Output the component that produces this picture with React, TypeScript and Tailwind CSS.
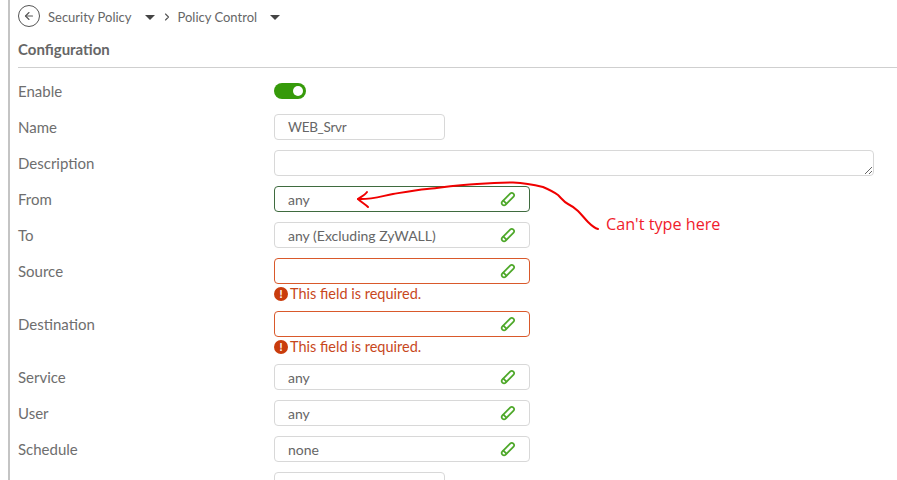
import { ArrowLeft, ChevronRight } from 'lucide-react'

const font = 'font-["Lato","Noto_Sans",sans-serif]'

function PencilIcon() {
  return (
    <svg width="16" height="16" viewBox="0 0 16 16" fill="none" stroke="#4ea82a" strokeWidth="1.8" strokeLinecap="round" strokeLinejoin="round">
      <path d="M2.2 10.6 10.4 2.4a1.9 1.9 0 0 1 2.7 0l.5.5a1.9 1.9 0 0 1 0 2.7l-8.2 8.2a1.9 1.9 0 0 1-2.7 0l-.5-.5a1.9 1.9 0 0 1 0-2.7Z" />
      <path d="M3.4 9.6 6.4 12.6" />
    </svg>
  )
}

function Caret() {
  return <div className="h-0 w-0 border-x-[5px] border-t-[5px] border-x-transparent border-t-[#444]" />
}

function Row({ label, children }: { label: string; children: React.ReactNode }) {
  return (
    <div className="flex items-start">
      <div className="h-[26px] w-[256px] shrink-0 text-[15px] leading-[27px] text-[#6e6e6e]">{label}</div>
      <div className="min-w-0 flex-1">{children}</div>
    </div>
  )
}

function PickField({ value, tone = 'normal' }: { value?: string; tone?: 'normal' | 'active' | 'error' }) {
  const border =
    tone === 'active' ? 'border-[#3f6b3f]' : tone === 'error' ? 'border-[#d9592b]' : 'border-[#d8d8d8]'
  return (
    <div className={`flex h-[26px] w-[256px] items-center justify-between rounded border bg-white pl-[13px] pr-[13px] text-[14px] text-[#666] ${border}`}>
      <span>{value}</span>
      <PencilIcon />
    </div>
  )
}

function FieldError() {
  return (
    <div className="flex h-[17px] items-center gap-[2px] pt-[2px] text-[14.5px] text-[#c8471c]">
      <div className="flex h-[14px] w-[14px] items-center justify-center rounded-full bg-[#c93c0c] text-[11px] leading-none font-bold text-white">!</div>
      <span>This field is required.</span>
    </div>
  )
}

export default function App() {
  return (
    <div className={`relative h-screen overflow-hidden bg-white ${font}`}>
      <div className="flex h-full">
        <div className="ml-2 h-full w-[2px] shrink-0 bg-[#c4c4c4]" />
        <div className="min-w-0 flex-1 pl-2">
          <div className="flex h-[34px] items-center text-[13px] text-[#666]">
            <div className="-mt-[2px] flex h-[22px] w-[22px] items-center justify-center rounded-full border border-[#555] text-[#555]">
              <ArrowLeft size={12} strokeWidth={2.2} />
            </div>
            <span className="ml-[8px] pt-[2px]">Security Policy</span>
            <div className="ml-[13px]"><Caret /></div>
            <ChevronRight size={12} strokeWidth={2.2} className="ml-[6px] text-[#555]" />
            <span className="ml-[5px] pt-[2px]">Policy Control</span>
            <div className="ml-[13px]"><Caret /></div>
          </div>
          <div className="mt-[5px] border-b border-[#cfcfcf] pb-[8px] text-[15px] leading-[20px] font-bold text-[#666]">Configuration</div>
          <div className="mt-[10px] flex flex-col gap-[10px]">
            <Row label="Enable">
              <div className="flex h-[26px] items-center">
                <div className="flex h-4 w-8 items-center justify-end rounded-full bg-[#369a0a] pr-[3px]">
                  <div className="h-[10px] w-[10px] rounded-full bg-white" />
                </div>
              </div>
            </Row>
            <Row label="Name">
              <div className="flex h-[26px] w-[171px] items-center rounded border border-[#d8d8d8] pl-[13px] text-[13.5px] tracking-[-0.3px] text-[#666]">WEB_Srvr</div>
            </Row>
            <Row label="Description">
              <textarea className="block h-[26px] min-h-[26px] w-[600px] rounded border border-[#d8d8d8] bg-white" />
            </Row>
            <Row label="From"><PickField value="any" tone="active" /></Row>
            <Row label="To"><PickField value="any (Excluding ZyWALL)" /></Row>
            <Row label="Source">
              <PickField tone="error" />
              <FieldError />
            </Row>
            <Row label="Destination">
              <PickField tone="error" />
              <FieldError />
            </Row>
            <Row label="Service"><PickField value="any" /></Row>
            <Row label="User"><PickField value="any" /></Row>
            <Row label="Schedule"><PickField value="none" /></Row>
            <Row label="">
              <div className="h-[26px] w-[171px] rounded border border-[#d8d8d8]" />
            </Row>
          </div>
        </div>
      </div>

      {/* hand drawn note on top of the form */}
      <svg className="pointer-events-none absolute top-0 left-0" width="897" height="480" fill="none" stroke="#f00000" strokeWidth="2" strokeLinecap="round" strokeLinejoin="round">
        <path d="M358 199 C370 200 382 196 393 194 C405 192 416 190 427 189 C445 187 460 185 477 184 C490 183 502 182.5 513 182.5 C525 183 535 185 543 187 C550 190 554 192 558 195 C562 199 564 202 568 204 C572 206 575 208 578 211 C582 215 585 219 588 222 C591 225 594 228 598 229" />
        <path d="M367 192 C365 195 361 197 358 199 C361 202 365 204 368 207" />
      </svg>
      <div className="absolute top-[214px] left-[606px] font-['Open_Sans',sans-serif] text-[16.2px] leading-[20px] text-[#f01c2c]">Can't type here</div>
    </div>
  )
}
